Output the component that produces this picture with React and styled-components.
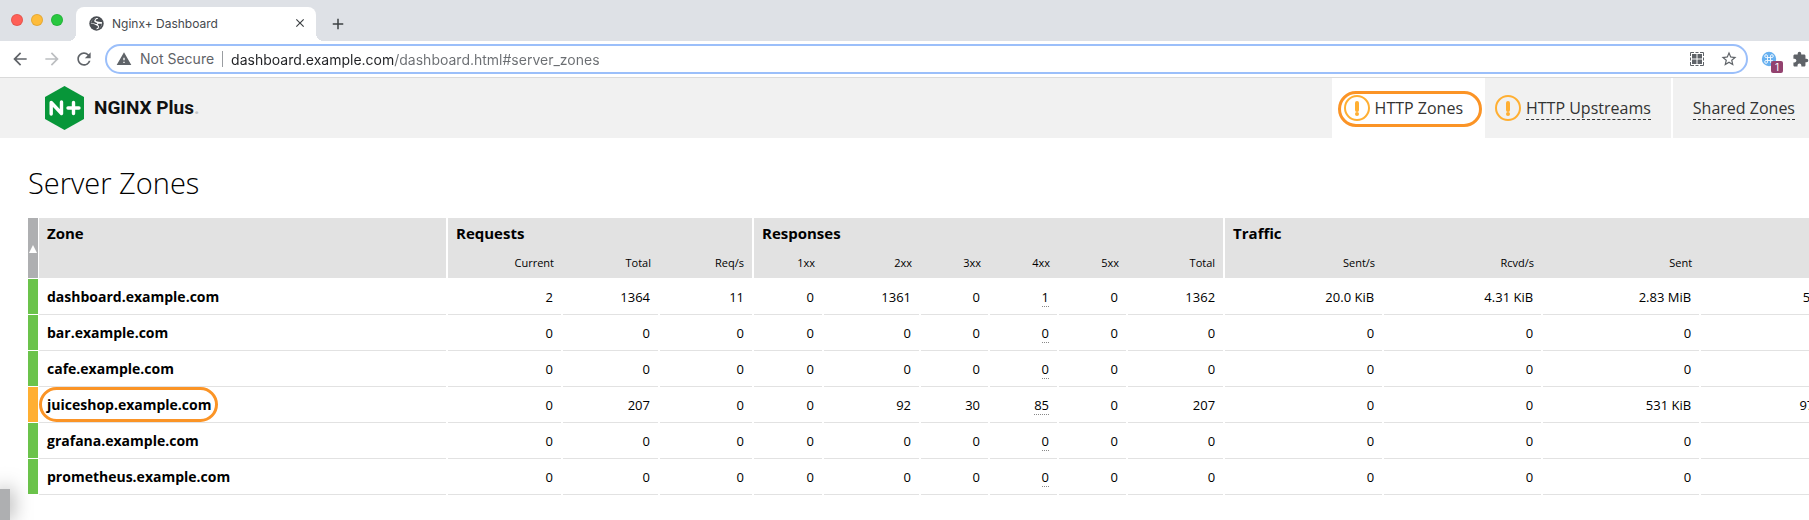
import React from "react";
import styled, { createGlobalStyle } from "styled-components";
import {
  MdAdd,
  MdArrowBack,
  MdArrowForward,
  MdClose,
  MdExtension,
  MdRefresh,
  MdStarBorder,
  MdWarning,
} from "react-icons/md";

const GlobalStyle = createGlobalStyle`
  *, *::before, *::after { box-sizing: border-box; }
  body {
    margin: 0;
    background: #fff;
    color: #000;
    font-family: "Open Sans", "Liberation Sans", sans-serif;
    overflow: hidden;
  }
  button { padding: 0; border: 0; background: none; color: inherit; font: inherit; }
`;

/* Browser frame */

const Browser = styled.header`
  font-family: Inter, Roboto, sans-serif;
  border-bottom: 1px solid #dadada;
`;

const TabStrip = styled.div`
  display: flex;
  align-items: flex-end;
  height: 41px;
  padding-left: 11px;
  background: #dee1e6;
`;

const WindowButtons = styled.div`
  display: flex;
  gap: 8px;
  padding-bottom: 15px;
  margin-right: 13px;
`;

const WindowButton = styled.button`
  width: 12px;
  height: 12px;
  border-radius: 50%;
  background: ${(p) => p.$color};
  box-shadow: inset 0 0 0 1px rgba(0, 0, 0, 0.1);
`;

const Tab = styled.div`
  position: relative;
  display: flex;
  align-items: center;
  width: 240px;
  height: 34px;
  padding: 0 9px 2px 13px;
  border-radius: 8px 8px 0 0;
  background: #fff;
  color: #45494d;
  font-size: 12px;

  &::before,
  &::after {
    content: "";
    position: absolute;
    bottom: 0;
    width: 8px;
    height: 8px;
  }
  &::before {
    right: 100%;
    background: radial-gradient(circle at 0 0, #dee1e6 8px, #fff 8px);
  }
  &::after {
    left: 100%;
    background: radial-gradient(circle at 100% 0, #dee1e6 8px, #fff 8px);
  }
`;

const TabTitle = styled.span`
  flex: 1;
  margin-left: 8px;
`;

const IconButton = styled.button`
  display: flex;
  align-items: center;
  justify-content: center;
  flex: none;
  width: ${(p) => p.$size || 20}px;
  height: ${(p) => p.$size || 20}px;
  color: ${(p) => p.$color || "#5f6368"};
`;

const NewTab = styled(IconButton)`
  margin: 0 0 7px 12px;
`;

const Toolbar = styled.div`
  display: flex;
  align-items: center;
  height: 36px;
  padding: 0 0 0 10px;
  overflow: hidden;
`;

const History = styled.div`
  display: flex;
  gap: 12px;
  margin-right: 11px;
`;

const AddressBar = styled.form`
  display: flex;
  align-items: center;
  flex: 1;
  height: 30px;
  padding: 0 7px 0 9px;
  border: 2px solid #9bbffa;
  border-radius: 15px;
  color: #5f6368;
  font-size: 14px;
`;

const Security = styled.label`
  display: flex;
  align-items: center;
  gap: 8px;
  margin-right: 8px;
  padding-right: 8px;
  border-right: 1px solid #9a9da1;
  line-height: 16px;
`;

const UrlInput = styled.input`
  flex: 1;
  min-width: 0;
  padding: 0;
  border: 0;
  outline: 0;
  font: inherit;
  color: transparent;
  background: linear-gradient(to right, #202124 163px, #6b6e72 163px);
  background-clip: text;
  -webkit-background-clip: text;
`;

const AddressActions = styled.div`
  display: flex;
  gap: 12px;
`;

const Extensions = styled.div`
  display: flex;
  gap: 11px;
  margin: 0 -1px 0 11px;
`;

const Extension = styled(IconButton)`
  position: relative;
`;

const Badge = styled.span`
  position: absolute;
  left: 12px;
  top: 12px;
  width: 12px;
  height: 12px;
  border-radius: 2px;
  background: #93426f;
  color: #fff;
  font-size: 10px;
  line-height: 12px;
  text-align: center;
`;

/* Dashboard header */

const SiteHeader = styled.div`
  display: flex;
  justify-content: space-between;
  height: 60px;
  padding-left: 45px;
  background: #f1f1f1;
`;

const Brand = styled.a`
  display: flex;
  align-items: center;
  gap: 10px;
  color: #111;
  font: 700 19px/24px Roboto, sans-serif;
  text-decoration: none;
`;

const BrandDot = styled.span`
  color: #c4c4c4;
`;

const Nav = styled.nav`
  display: flex;
  font-size: 16px;
`;

const NavItem = styled.a`
  position: relative;
  display: flex;
  align-items: center;
  gap: 5px;
  padding: ${(p) => p.$pad};
  border-right: ${(p) => (p.$divider ? 2 : 0)}px solid #fff;
  background: ${(p) => (p.$active ? "#fff" : "transparent")};
  color: #333;
  text-decoration: none;
  white-space: nowrap;
`;

const NavLabel = styled.span`
  line-height: 22px;
  border-bottom: 1px dashed ${(p) => (p.$active ? "transparent" : "#333")};
`;

const Highlight = styled.span`
  position: absolute;
  inset: ${(p) => p.$inset};
  border: 3px solid #fb9426;
  border-radius: 18px;
  pointer-events: none;
`;

/* Zones table */

const Content = styled.main`
  padding: 24px 0 0 28px;
`;

const Title = styled.h1`
  margin: 0 0 14px;
  font-size: 29px;
  font-weight: 300;
  line-height: 42px;
`;

const ZonesTable = styled.table`
  width: 100%;
  min-width: 1830px;
  table-layout: fixed;
  border-spacing: 0;
`;

const Col = styled.col`
  width: ${(p) => p.$w}px;
`;

const SortCell = styled.th`
  padding: 0;
  border-right: 1px solid #fff;
  border-bottom: 1px solid #fff;
  background: #aeafb1;
`;

const SortButton = styled.button`
  display: block;
  width: 8px;
  height: 8px;
  margin: 2px auto 0;
  background: #fff;
  clip-path: polygon(50% 0, 100% 100%, 0 100%);
`;

const GroupHead = styled.th`
  height: 31px;
  padding: 0 8px;
  border-right: 2px solid #fff;
  border-bottom: ${(p) => (p.$tall ? 1 : 0)}px solid #fff;
  background: #e2e2e2;
  font-size: 15px;
  line-height: 30px;
  text-align: left;
  vertical-align: top;
`;

const SubHead = styled.th`
  height: 30px;
  padding: 0 ${(p) => (p.$last ? 8 : 9)}px 2px 0;
  border-right: ${(p) => (p.$last ? 2 : 0)}px solid #fff;
  border-bottom: 1px solid #fff;
  background: #e2e2e2;
  font-size: 11px;
  font-weight: 400;
  text-align: right;
`;

const StatusCell = styled.td`
  padding: 0;
  border-right: 1px solid #fff;
  border-bottom: 1px solid #fff;
  background: ${(p) => (p.$warning ? "#ffaf32" : "#6bc34b")};
`;

const ZoneCell = styled.th`
  height: 36px;
  padding: 0 8px;
  border-right: 2px solid #fff;
  box-shadow: inset 0 -1px #e2e2e2;
  font-size: 14px;
  line-height: 20px;
  text-align: left;
`;

const ZoneName = styled.span`
  position: relative;
`;

const ValueCell = styled.td`
  padding: 0 8px 0 0;
  border-right: 2px solid #fff;
  box-shadow: inset 0 -1px #e2e2e2;
  font-size: 13px;
  line-height: 18px;
  text-align: right;
  white-space: nowrap;
`;

const Hint = styled.span`
  border-bottom: 1px dotted #888;
`;

const SideTab = styled.aside`
  position: fixed;
  left: 0;
  bottom: 0;
  width: 10px;
  height: 31px;
  background: #aeafb1;
  box-shadow: 0 0 20px rgba(0, 0, 0, 0.5);
`;

/* Drawings */

const Globe = () => (
  <svg width="15" height="15" viewBox="0 0 15 15" aria-hidden="true">
    <circle cx="7.5" cy="7.5" r="7.2" fill="#4a4e53" />
    <path
      d="M9.200 1.900C8.800 3 7.800 3.100 7 3.500 6.400 4 6.600 4.900 7.600 5.300 9.500 5.800 11.200 6.300 12.900 5.900 13.400 8.500 12 11.600 9 12.900L7 13.200C7.200 12.300 8.800 12 9 10.900 9 9.800 7.600 9.900 7 9.300 6.300 8.400 4.500 8 1.900 7.500 1.900 4.500 4.900 1.600 9.200 1.900z"
      fill="#fff"
    />
    <path
      d="M2 7C2.500 4.200 4.600 2.200 7.400 2 6.300 3.200 5 4.200 5.200 5.300 5.700 6.800 8.200 6.400 8.400 8.100 6.400 8.300 4.900 7 2 7zM8.600 8.200C9.600 7.500 11.300 7.800 12.800 7.800 12.600 10 11.200 12 9.200 12.700 9.900 11.700 10.800 10.200 8.600 8.200z"
      fill="#4a4e53"
    />
  </svg>
);

const QrIcon = () => (
  <svg width="14" height="14" viewBox="0 0 14 14" aria-hidden="true">
    <path
      d="M.5 4V.5H4M5.500.5h3M10 .5h3.500V4M13.500 5.500v3M13.500 10v3.500H10M8.500 13.500h-3M4 13.500H.5V10M.5 8.500v-3"
      fill="none"
      stroke="#5f6368"
    />
    <path d="M2 2h4.500v4.500H2zM7.500 2H12v4.500H7.500zM2 7.500h4.500V12H2zM7.500 7.500H12V12H7.500z" fill="#5f6368" />
  </svg>
);

const CommandIcon = () => (
  <svg width="16" height="16" viewBox="0 0 16 16" aria-hidden="true">
    <circle cx="8" cy="8" r="7.200" fill="#68b1f0" />
    <path
      d="M6.500 6.500h3v3h-3zM6.500 6.500H5.200a1.400 1.400 0 1 1 1.300-1.400zM9.500 6.500V5.100a1.400 1.400 0 1 1 1.400 1.400zM9.500 9.500h1.400a1.400 1.400 0 1 1-1.400 1.400zM6.500 9.500v1.400a1.400 1.400 0 1 1-1.400-1.400z"
      fill="none"
      stroke="#fff"
      strokeWidth="0.900"
    />
  </svg>
);

const BrandMark = () => (
  <svg width="39" height="44" viewBox="0 0 39 44" aria-hidden="true">
    <path d="M19.500 0 39 11v22L19.500 44 0 33V11z" fill="#079639" />
    <path
      d="M6.200 28V16.500l10.300 11V16M28.500 16.500v11M23 22H34"
      fill="none"
      stroke="#fff"
      strokeWidth="3.400"
      strokeLinecap="round"
      strokeLinejoin="round"
    />
  </svg>
);

const AlertIcon = () => (
  <svg width="26" height="26" viewBox="0 0 26 26" aria-hidden="true">
    <circle cx="13" cy="13" r="12" fill="none" stroke="#ffaf32" strokeWidth="2" />
    <path d="M13 8v7" stroke="#ffaf32" strokeWidth="4" strokeLinecap="round" />
    <circle cx="13" cy="19" r="2" fill="#ffaf32" />
  </svg>
);

/* Data */

const columns = [11, 409, 115, 97, 94, 70, 97, 69, 69, 69, 97, 159, 159, 158, 157];

const groups = [
  { name: "Requests", fields: ["Current", "Total", "Req/s"] },
  { name: "Responses", fields: ["1xx", "2xx", "3xx", "4xx", "5xx", "Total"] },
  { name: "Traffic", fields: ["Sent/s", "Rcvd/s", "Sent", "Rcvd"] },
];

const idle = Array(13).fill("0");

const zones = [
  {
    name: "dashboard.example.com",
    values: ["2", "1364", "11", "0", "1361", "0", "1", "0", "1362", "20.0 KiB", "4.31 KiB", "2.83 MiB", "583 KiB"],
  },
  { name: "bar.example.com", values: idle },
  { name: "cafe.example.com", values: idle },
  {
    name: "juiceshop.example.com",
    warning: true,
    values: ["0", "207", "0", "0", "92", "30", "85", "0", "207", "0", "0", "531 KiB", "97.7 KiB"],
  },
  { name: "grafana.example.com", values: idle },
  { name: "prometheus.example.com", values: idle },
];

const CLIENT_ERRORS = 6;

function BrowserFrame() {
  return (
    <Browser>
      <TabStrip>
        <WindowButtons>
          <WindowButton $color="#ff5f57" aria-label="Close window" />
          <WindowButton $color="#febc3b" aria-label="Minimize window" />
          <WindowButton $color="#28c840" aria-label="Zoom window" />
        </WindowButtons>
        <Tab>
          <Globe />
          <TabTitle>Nginx+ Dashboard</TabTitle>
          <IconButton $size={14} $color="#3c4043" aria-label="Close tab">
            <MdClose size={14} />
          </IconButton>
        </Tab>
        <NewTab $color="#3c4043" aria-label="New tab">
          <MdAdd size={18} />
        </NewTab>
      </TabStrip>
      <Toolbar>
        <History>
          <IconButton aria-label="Back"><MdArrowBack size={20} /></IconButton>
          <IconButton $color="#bcbec1" aria-label="Forward"><MdArrowForward size={20} /></IconButton>
          <IconButton aria-label="Reload"><MdRefresh size={20} /></IconButton>
        </History>
        <AddressBar>
          <Security htmlFor="address">
            <MdWarning size={16} />
            Not Secure
          </Security>
          <UrlInput
            id="address"
            type="text"
            spellCheck={false}
            defaultValue="dashboard.example.com/dashboard.html#server_zones"
          />
          <AddressActions>
            <IconButton type="button" aria-label="QR code"><QrIcon /></IconButton>
            <IconButton type="button" aria-label="Bookmark"><MdStarBorder size={18} /></IconButton>
          </AddressActions>
        </AddressBar>
        <Extensions>
          <Extension aria-label="Extension">
            <CommandIcon />
            <Badge>1</Badge>
          </Extension>
          <IconButton aria-label="Extensions"><MdExtension size={17} /></IconButton>
        </Extensions>
      </Toolbar>
    </Browser>
  );
}

function DashboardHeader() {
  return (
    <SiteHeader>
      <Brand href="#">
        <BrandMark />
        <span>NGINX Plus<BrandDot>.</BrandDot></span>
      </Brand>
      <Nav>
        <NavItem href="#server_zones" $active $pad="0 22px 0 12px">
          <AlertIcon />
          <NavLabel $active>HTTP Zones</NavLabel>
          <Highlight $inset="13px 3px 11px 6px" />
        </NavItem>
        <NavItem href="#upstreams" $divider $pad="0 20px 0 10px">
          <AlertIcon />
          <NavLabel>HTTP Upstreams</NavLabel>
        </NavItem>
        <NavItem href="#shared_zones" $pad="0 14px 0 20px">
          <NavLabel>Shared Zones</NavLabel>
        </NavItem>
      </Nav>
    </SiteHeader>
  );
}

function ServerZones() {
  return (
    <ZonesTable>
      <colgroup>
        {columns.map((w, i) => <Col key={i} $w={w} />)}
      </colgroup>
      <thead>
        <tr>
          <SortCell rowSpan={2}><SortButton aria-label="Sort by status" /></SortCell>
          <GroupHead rowSpan={2} $tall>Zone</GroupHead>
          {groups.map((g) => (
            <GroupHead key={g.name} colSpan={g.fields.length}>{g.name}</GroupHead>
          ))}
        </tr>
        <tr>
          {groups.map((g) =>
            g.fields.map((f, i) => (
              <SubHead key={g.name + f} $last={i === g.fields.length - 1}>{f}</SubHead>
            ))
          )}
        </tr>
      </thead>
      <tbody>
        {zones.map((z) => (
          <tr key={z.name}>
            <StatusCell $warning={z.warning} />
            <ZoneCell scope="row">
              <ZoneName>
                {z.name}
                {z.warning && <Highlight $inset="-8px -7px -8px -8px" />}
              </ZoneName>
            </ZoneCell>
            {z.values.map((v, i) => (
              <ValueCell key={i}>{i === CLIENT_ERRORS ? <Hint>{v}</Hint> : v}</ValueCell>
            ))}
          </tr>
        ))}
      </tbody>
    </ZonesTable>
  );
}

export default function App() {
  return (
    <>
      <GlobalStyle />
      <BrowserFrame />
      <DashboardHeader />
      <Content>
        <Title>Server Zones</Title>
        <ServerZones />
      </Content>
      <SideTab />
    </>
  );
}
